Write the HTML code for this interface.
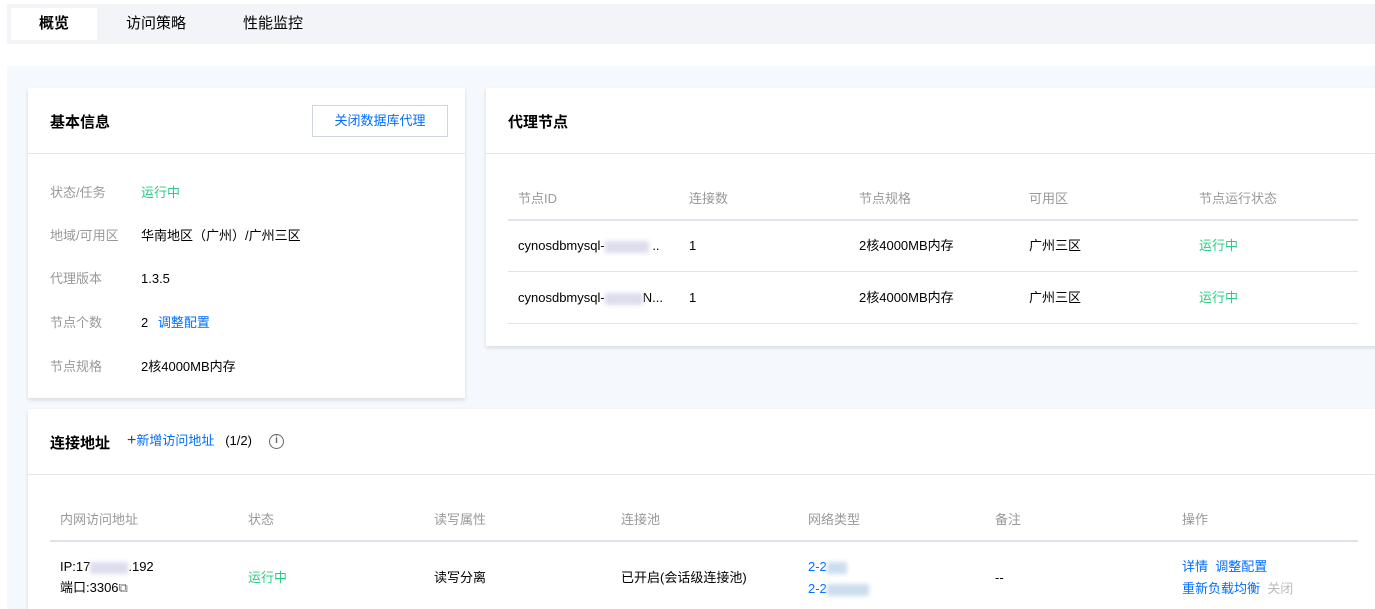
<!DOCTYPE html><html><head><meta charset="utf-8"><style>
*{margin:0;padding:0;box-sizing:border-box}
html,body{width:1375px;height:609px;overflow:hidden}
body{background:#fff;font-family:"Liberation Sans","Noto Sans CJK SC",sans-serif;font-size:13px;color:#000;position:relative}
.abs{position:absolute}
.tabs{left:7px;top:4px;width:1368px;height:40px;background:#f2f4f8}
.tab{position:absolute;top:4px;height:32px;line-height:32px;font-size:15px;color:#000}
.bg{left:7px;top:66px;width:1368px;height:543px;background:#f5f8fc}
.card{position:absolute;background:#fff;box-shadow:0 2px 4px rgba(0,0,0,.12)}
.hd{height:66px;border-bottom:1px solid #e5e5e5;position:relative}
.hd b{position:absolute;left:22px;top:23px;font-size:15px;font-weight:bold}
.g{color:#999}.grn{color:#29cc85}.blu{color:#006eff}
.t{position:absolute;white-space:nowrap;line-height:16px}
.blur{display:inline-block;background:#dde;filter:blur(2px);height:12px;vertical-align:middle}
.line{position:absolute;height:1px;background:#e0e4ea}
</style></head><body>
<div class="abs tabs">
 <div class="abs" style="left:4px;top:4px;width:86px;height:32px;background:#fff"></div>
 <div class="tab" style="left:32px;font-weight:bold">概览</div>
 <div class="tab" style="left:119px">访问策略</div>
 <div class="tab" style="left:236px">性能监控</div>
</div>
<div class="abs bg"></div>

<div class="card" style="left:28px;top:88px;width:437px;height:310px">
 <div class="hd"><b>基本信息</b>
  <div class="t" style="left:284px;top:17px;width:136px;height:32px;border:1px solid #cfd5de;text-align:center;line-height:30px;color:#006eff">关闭数据库代理</div></div>
 <div class="t g" style="left:22px;top:97px">状态/任务</div><div class="t grn" style="left:113px;top:97px">运行中</div>
 <div class="t g" style="left:22px;top:140px">地域/可用区</div><div class="t" style="left:113px;top:140px">华南地区（广州）/广州三区</div>
 <div class="t g" style="left:22px;top:183px">代理版本</div><div class="t" style="left:113px;top:183px">1.3.5</div>
 <div class="t g" style="left:22px;top:227px">节点个数</div><div class="t" style="left:113px;top:227px">2 <span class="blu" style="margin-left:6px">调整配置</span></div>
 <div class="t g" style="left:22px;top:271px">节点规格</div><div class="t" style="left:113px;top:271px">2核4000MB内存</div>
</div>

<div class="card" style="left:486px;top:88px;width:900px;height:258px">
 <div class="hd"><b>代理节点</b></div>
 <div class="t g" style="left:32px;top:103px">节点ID</div><div class="t g" style="left:203px;top:103px">连接数</div><div class="t g" style="left:373px;top:103px">节点规格</div><div class="t g" style="left:543px;top:103px">可用区</div><div class="t g" style="left:713px;top:103px">节点运行状态</div>
 <div class="line" style="left:22px;top:131px;width:850px;height:2px"></div>
 <div class="t" style="left:32px;top:150px">cynosdbmysql-<span class="blur" style="width:44px"></span> ..</div><div class="t" style="left:203px;top:150px">1</div><div class="t" style="left:373px;top:150px">2核4000MB内存</div><div class="t" style="left:543px;top:150px">广州三区</div><div class="t grn" style="left:713px;top:150px">运行中</div>
 <div class="line" style="left:22px;top:183px;width:850px"></div>
 <div class="t" style="left:32px;top:202px">cynosdbmysql-<span class="blur" style="width:38px"></span>N...</div><div class="t" style="left:203px;top:202px">1</div><div class="t" style="left:373px;top:202px">2核4000MB内存</div><div class="t" style="left:543px;top:202px">广州三区</div><div class="t grn" style="left:713px;top:202px">运行中</div>
 <div class="line" style="left:22px;top:235px;width:850px"></div>
</div>

<div class="card" style="left:28px;top:409px;width:1360px;height:200px">
 <div class="hd"><b>连接地址</b>
  <div class="t" style="left:99px;top:24px"><span style="color:#444;font-size:16px">+</span><span class="blu">新增访问地址</span>&nbsp;&nbsp;&nbsp;(1/2)</div>
  <div class="t" style="left:241px;top:25px;width:15px;height:15px;border:1.5px solid #666;border-radius:50%;text-align:center;font-size:10px;line-height:12px;font-weight:bold;color:#666">i</div>
 </div>
 <div class="t g" style="left:32px;top:103px">内网访问地址</div><div class="t g" style="left:220px;top:103px">状态</div><div class="t g" style="left:406px;top:103px">读写属性</div><div class="t g" style="left:593px;top:103px">连接池</div><div class="t g" style="left:780px;top:103px">网络类型</div><div class="t g" style="left:967px;top:103px">备注</div><div class="t g" style="left:1154px;top:103px">操作</div>
 <div class="line" style="left:22px;top:131px;width:1308px;height:2px"></div>
 <div class="t" style="left:32px;top:150px">IP:17<span class="blur" style="width:38px"></span>.192</div>
 <div class="t" style="left:32px;top:171px">端口:3306<span style="color:#666">⧉</span></div>
 <div class="t grn" style="left:220px;top:161px">运行中</div>
 <div class="t" style="left:406px;top:161px">读写分离</div>
 <div class="t" style="left:593px;top:161px">已开启(会话级连接池)</div>
 <div class="t blu" style="left:780px;top:150px">2-2<span class="blur" style="width:20px;background:#cde"></span></div>
 <div class="t blu" style="left:780px;top:172px">2-2<span class="blur" style="width:42px;background:#cde"></span></div>
 <div class="t" style="left:967px;top:161px">--</div>
 <div class="t blu" style="left:1154px;top:150px">详情&nbsp;&nbsp;调整配置</div>
 <div class="t" style="left:1154px;top:172px"><span class="blu">重新负载均衡</span>&nbsp;&nbsp;<span style="color:#bbb">关闭</span></div>
</div>
</body></html>
